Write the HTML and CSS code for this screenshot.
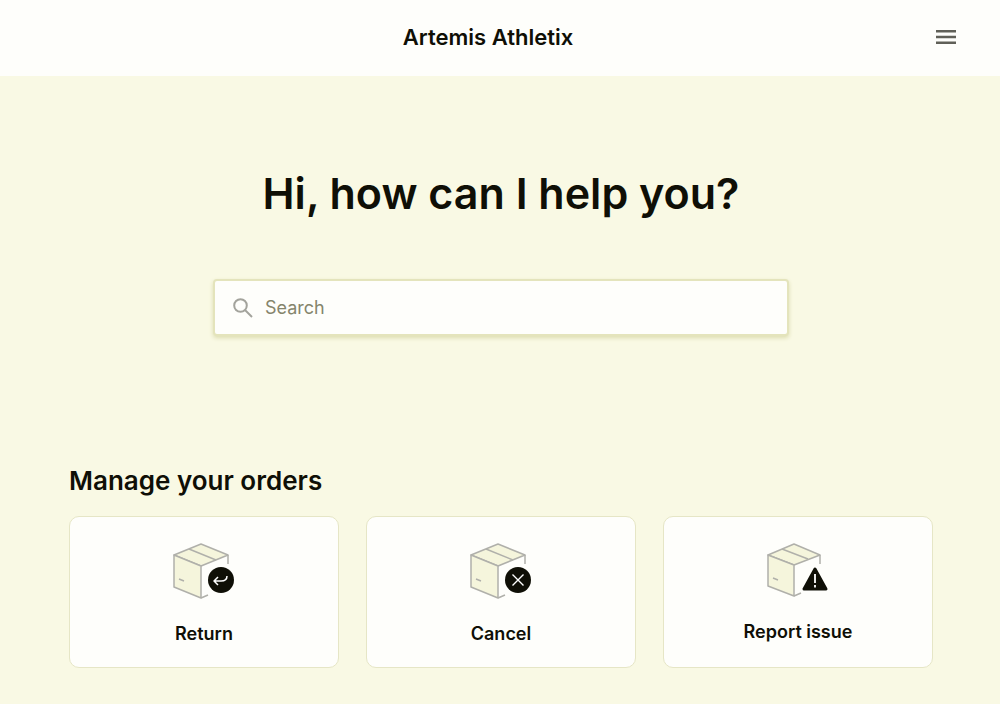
FILE: index.html
```html
<!DOCTYPE html>
<html lang="en">
<head>
    <meta charset="utf-8">
    <meta name="viewport" content="width=device-width, initial-scale=1">
    <title>Artemis Athletix</title>
    <link rel="stylesheet" href="styles.css">
</head>
<body>
    <header class="header">
        <a href="#" class="brand">Artemis Athletix</a>
        <button class="menu-button" type="button" aria-label="Menu">
            <svg width="20" height="14" viewBox="0 0 20 14" fill="none" stroke="#606058" stroke-width="2.4">
                <path d="M0 1.200h20M0 7h20M0 12.800h20"/>
            </svg>
        </button>
    </header>

    <main class="content">
        <h1 class="title">Hi, how can I help you?</h1>

        <form class="search">
            <label for="search" aria-label="Search">
                <svg width="20" height="20" viewBox="0 0 20 20" fill="none" stroke="#a3a39c" stroke-width="2">
                    <circle cx="7.5" cy="7.5" r="6.3"/>
                    <path d="M12 12l7 7"/>
                </svg>
            </label>
            <input type="text" id="search" placeholder="Search">
        </form>

        <section class="orders">
            <h2>Manage your orders</h2>
            <div class="cards">
                <a href="#" class="card">
                    <svg width="62" height="58" viewBox="0 0 62 58" fill="none" stroke="#b0b0aa" stroke-width="1.5" stroke-linejoin="round">
                        <path d="M1 12L28 1l27 11-27 11z" fill="#f5f5dc"/>
                        <path d="M1 12v32l27 11V23z" fill="#f5f5dc"/>
                        <path d="M16 6l27 11M55 12v9M28 55l7-3M6 36l5 2"/>
                        <circle cx="48" cy="37" r="13" fill="#0f0f06" stroke="none"/>
                        <path d="M54 33c0 4-3 5-6 5h-6M45 34l-4 4 4 4" stroke="#fff" stroke-width="1.5"/>
                    </svg>
                    <span>Return</span>
                </a>
                <a href="#" class="card">
                    <svg width="62" height="58" viewBox="0 0 62 58" fill="none" stroke="#b0b0aa" stroke-width="1.5" stroke-linejoin="round">
                        <path d="M1 12L28 1l27 11-27 11z" fill="#f5f5dc"/>
                        <path d="M1 12v32l27 11V23z" fill="#f5f5dc"/>
                        <path d="M16 6l27 11M55 12v9M28 55l7-3M6 36l5 2"/>
                        <circle cx="48" cy="37" r="13" fill="#0f0f06" stroke="none"/>
                        <path d="M42.500 31.500l11 11M53.500 31.500l-11 11" stroke="#fff" stroke-width="1.400"/>
                    </svg>
                    <span>Cancel</span>
                </a>
                <a href="#" class="card">
                    <svg width="62" height="56" viewBox="0 0 62 56" fill="none" stroke="#b0b0aa" stroke-width="1.5" stroke-linejoin="round">
                        <path d="M1 12L27 1l26 11-26 10z" fill="#f5f5dc"/>
                        <path d="M1 12v31l26 10V22z" fill="#f5f5dc"/>
                        <path d="M15 6l26 10M53 12v9M27 53l7-3M6 35l5 2"/>
                        <path d="M48 26l11 20H37z" fill="#0f0f06" stroke="#0f0f06" stroke-width="3"/>
                        <path d="M48 31v9M48 42v2.500" stroke="#fff" stroke-width="1.800"/>
                    </svg>
                    <span>Report issue</span>
                </a>
            </div>
        </section>
    </main>
</body>
</html>
```

FILE: styles.css
```css
* {
    box-sizing: border-box;
}

body {
    margin: 0;
    min-height: 100vh;
    background-color: #f9f9e4;
    color: #0f0f06;
    font-family: Inter, "Liberation Sans", sans-serif;
}

a {
    color: inherit;
    text-decoration: none;
}

.header {
    display: grid;
    grid-template-columns: 20px 1fr 20px;
    align-items: center;
    height: 76px;
    padding: 0 44px 2px 20px;
    background-color: #fefefb;
}

.brand {
    grid-column: 2;
    justify-self: center;
    font-size: 22px;
    font-weight: 600;
}

.menu-button {
    display: flex;
    padding: 0;
    border: none;
    background: none;
    cursor: pointer;
}

.content {
    padding: 89px 67px 37px 69px;
}

.title {
    margin: 0;
    font-size: 43px;
    font-weight: 600;
    line-height: 56px;
    text-align: center;
}

.search {
    display: flex;
    align-items: center;
    gap: 12px;
    max-width: 576px;
    height: 57px;
    margin: 58px auto 0;
    padding: 0 18px;
    border: 2px solid #e4e4bc;
    border-radius: 4px;
    background-color: #fefefb;
    box-shadow: 0 2px 4px #dcdcb0;
}

.search label {
    display: flex;
}

.search input {
    flex: 1;
    min-width: 0;
    padding: 0;
    border: none;
    outline: none;
    background: none;
    color: inherit;
    font-family: inherit;
    font-size: 18px;
}

.search input::placeholder {
    color: #85856c;
    opacity: 1;
}

.orders {
    margin-top: 129px;
}

.orders h2 {
    margin: 0 0 19px;
    font-size: 26px;
    font-weight: 600;
    line-height: 32px;
}

.cards {
    display: grid;
    grid-template-columns: repeat(3, 1fr);
    gap: 27px;
}

.card {
    display: flex;
    flex-direction: column;
    align-items: center;
    gap: 21px;
    padding: 26px 16px 21px;
    border: 1px solid #e6e6c6;
    border-radius: 10px;
    background-color: #fefefb;
    font-size: 18px;
    font-weight: 600;
    line-height: 24px;
}
```
